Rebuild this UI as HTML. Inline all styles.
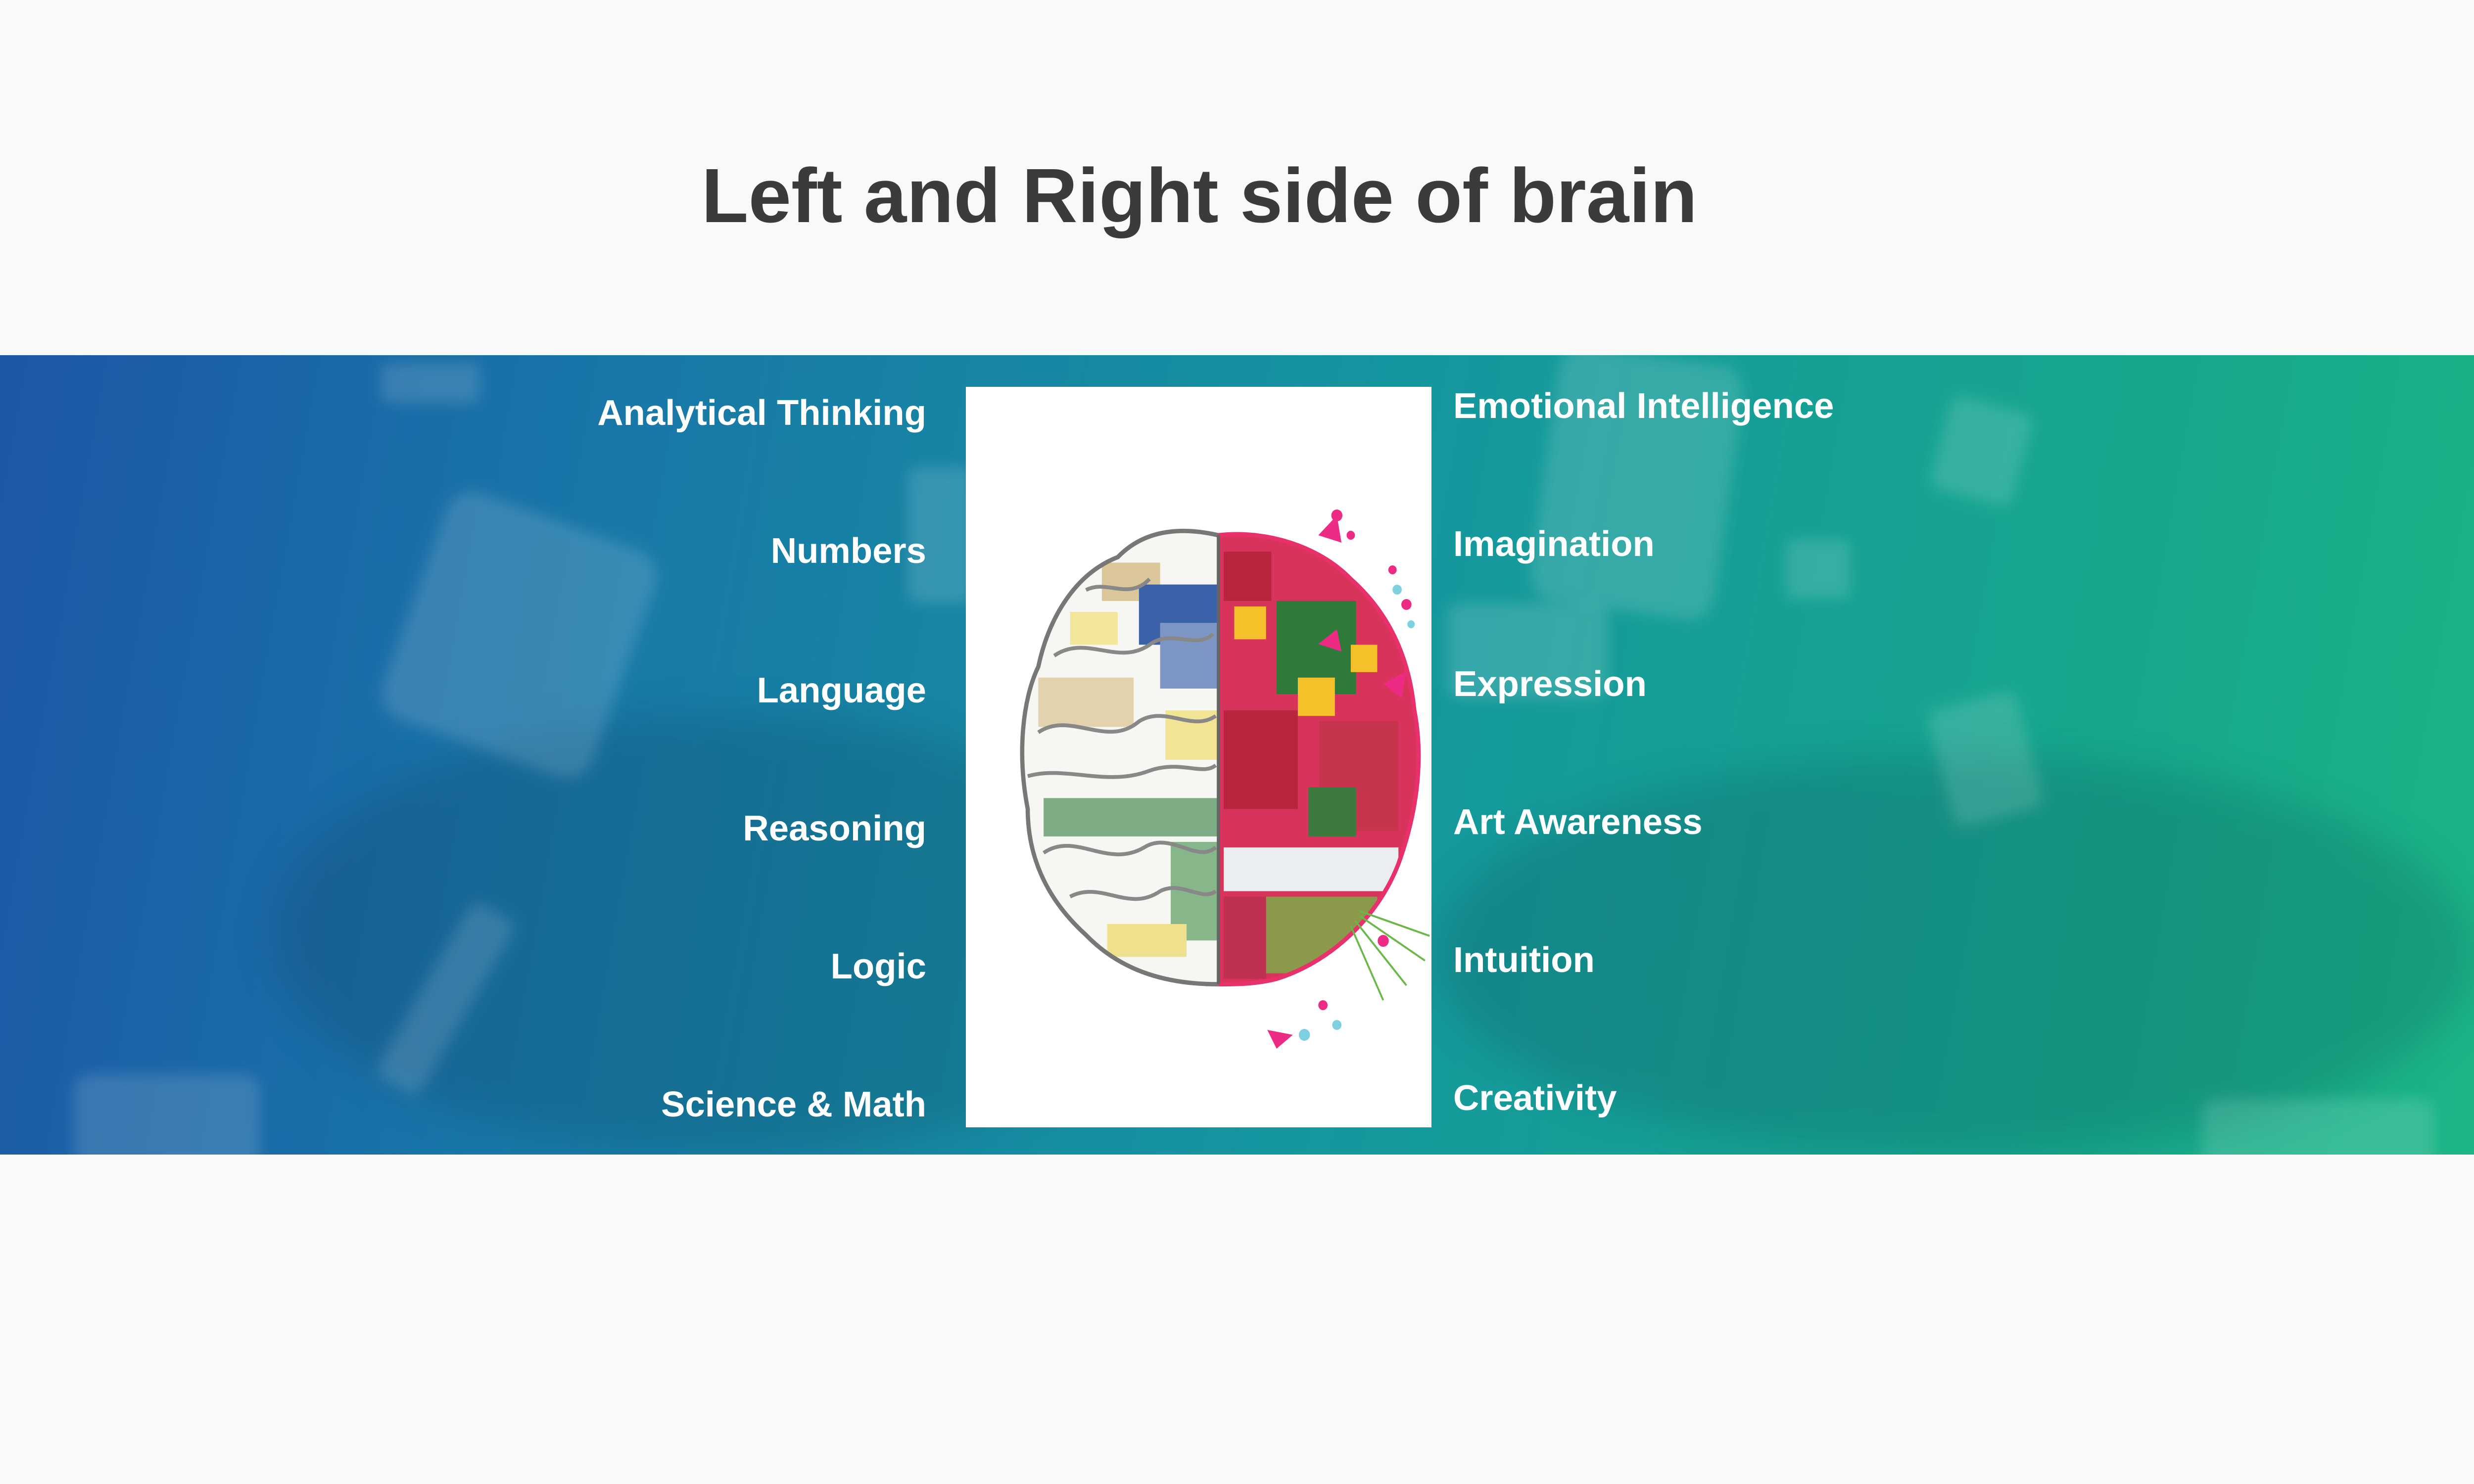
<!DOCTYPE html>
<html><head><meta charset="utf-8">
<style>
html,body{margin:0;padding:0;width:100%;height:100%}
body{background:#f9f9f9;position:relative;overflow:hidden;font-family:"Liberation Sans",Arial,sans-serif}
.wrap{position:absolute;left:0;top:0;width:100vw;height:100vh}
h1{position:absolute;left:0;width:96.96%;top:10.6%;margin:0;text-align:center;font-size:3.11vw;line-height:1;font-weight:bold;color:#3b3b3b;white-space:nowrap}
.band{position:absolute;left:0;top:23.93%;width:100%;height:53.87%;background:linear-gradient(100deg,#1c57a6 0%,#1878a8 25%,#15979e 55%,#16a98b 85%,#1bb587 100%);overflow:hidden}
.blob{position:absolute;background:rgba(255,255,255,0.14);border-radius:12%;filter:blur(14px)}
.dark{position:absolute;background:rgba(10,40,60,0.16);filter:blur(40px);border-radius:50%}
.panel{position:absolute;left:39.03%;top:26.07%;width:18.82%;height:49.9%;background:#fff}
.panel svg{position:absolute;left:0;top:0;width:100%;height:100%}
.l,.r{position:absolute;color:#fff;font-weight:bold;font-size:1.45vw;line-height:1;white-space:nowrap}
.l{right:62.56%;text-align:right}
.r{left:58.74%}
</style></head><body>
<div class="wrap">
<h1>Left and Right side of brain</h1>
<div class="band">
 <div class="dark" style="left:11%;top:45%;width:37%;height:55%"></div>
 <div class="dark" style="left:58%;top:50%;width:42%;height:50%"></div>
 <div class="blob" style="left:16.5%;top:20%;width:9%;height:30%;transform:rotate(20deg)"></div>
 <div class="blob" style="left:15.4%;top:1%;width:4%;height:5%"></div>
 <div class="blob" style="left:36.7%;top:14%;width:2.6%;height:17%"></div>
 <div class="blob" style="left:78.4%;top:6%;width:3.4%;height:12%;transform:rotate(15deg)"></div>
 <div class="blob" style="left:72.2%;top:23%;width:2.6%;height:7.5%"></div>
 <div class="blob" style="left:78.4%;top:43%;width:3.7%;height:15%;transform:rotate(-15deg)"></div>
 <div class="blob" style="left:62.4%;top:0%;width:7.5%;height:32%;transform:rotate(8deg)"></div>
 <div class="blob" style="left:58.5%;top:31%;width:6.5%;height:12%"></div>
 <div class="blob" style="left:17%;top:68%;width:2%;height:25%;transform:rotate(30deg)"></div>
 <div class="blob" style="left:3%;top:90%;width:7.5%;height:12%"></div>
 <div class="blob" style="left:89%;top:93%;width:9.4%;height:9%"></div>
</div>
<div class="panel">
<svg viewBox="0 0 1004 1497" preserveAspectRatio="none">
 <defs>
  <clipPath id="lh"><path d="M510 300 C420 280 360 300 320 340 C240 370 190 450 170 540 C140 600 130 700 150 800 C150 880 180 960 260 1030 C330 1100 420 1120 510 1120 Z"/></clipPath>
  <clipPath id="rh"><path d="M510 300 C600 290 700 320 760 380 C830 440 870 520 880 620 C900 720 880 820 850 900 C810 1000 720 1080 620 1110 C580 1120 540 1120 510 1120 Z"/></clipPath>
 </defs>
 <g transform="translate(122,300) scale(1.142,1.107) translate(-140,-300)">
 <g clip-path="url(#lh)">
  <rect x="120" y="280" width="400" height="860" fill="#f6f6f3"/>
  <rect x="290" y="350" width="110" height="70" fill="#dcc79a"/>
  <rect x="360" y="390" width="150" height="110" fill="#3b62a8"/>
  <rect x="400" y="460" width="110" height="120" fill="#7d96c4"/>
  <rect x="170" y="560" width="180" height="90" fill="#e2d2ae"/>
  <rect x="230" y="440" width="90" height="60" fill="#f2e79a"/>
  <rect x="410" y="620" width="100" height="90" fill="#f1e494"/>
  <rect x="180" y="780" width="330" height="70" fill="#5f9a68" opacity="0.8"/>
  <rect x="420" y="860" width="90" height="180" fill="#62a068" opacity="0.75"/>
  <rect x="300" y="1010" width="150" height="60" fill="#efe08e"/>
  <g fill="none" stroke="#888" stroke-width="7">
   <path d="M200 520 C260 480 320 540 380 500 C420 470 470 510 500 480"/>
   <path d="M170 660 C230 620 300 690 360 640 C410 610 460 660 505 630"/>
   <path d="M180 880 C240 840 300 910 370 870 C420 840 470 900 505 870"/>
   <path d="M230 960 C290 930 340 990 400 950 C440 930 480 970 505 950"/>
   <path d="M260 400 C300 380 340 420 380 380"/>
   <path d="M150 740 C220 720 300 760 380 730 C440 710 480 740 505 720"/>
  </g>
 </g>
 <g clip-path="url(#rh)">
  <rect x="505" y="280" width="400" height="860" fill="#d8335a"/>
  <rect x="620" y="420" width="150" height="170" fill="#2f7a3a"/>
  <rect x="520" y="330" width="90" height="90" fill="#b9243e"/>
  <rect x="520" y="620" width="140" height="180" fill="#b9243e"/>
  <rect x="700" y="640" width="150" height="200" fill="#c7344d"/>
  <rect x="660" y="560" width="70" height="70" fill="#f5c02a"/>
  <rect x="540" y="430" width="60" height="60" fill="#f5c02a"/>
  <rect x="760" y="500" width="50" height="50" fill="#f5c02a"/>
  <rect x="680" y="760" width="90" height="90" fill="#3c7a40"/>
  <rect x="520" y="870" width="330" height="80" fill="#eaeef0"/>
  <rect x="590" y="960" width="220" height="140" fill="#8a9a4a"/>
  <rect x="520" y="960" width="80" height="150" fill="#c03050"/>
 </g>
 <path d="M510 300 C420 280 360 300 320 340 C240 370 190 450 170 540 C140 600 130 700 150 800 C150 880 180 960 260 1030 C330 1100 420 1120 510 1120" fill="none" stroke="#777" stroke-width="8"/>
 <path d="M510 300 C600 290 700 320 760 380 C830 440 870 520 880 620 C900 720 880 820 850 900 C810 1000 720 1080 620 1110 C580 1120 540 1120 510 1120" fill="none" stroke="#e8316a" stroke-width="8"/>
 <line x1="510" y1="300" x2="510" y2="1120" stroke="#666" stroke-width="6"/>
 </g>
 <g fill="#ee2b84">
  <circle cx="800" cy="260" r="12"/><circle cx="830" cy="300" r="9"/><circle cx="950" cy="440" r="11"/>
  <circle cx="920" cy="370" r="9"/><circle cx="770" cy="1250" r="10"/><circle cx="900" cy="1120" r="12"/>
  <path d="M760 300 l40 -40 l10 55 z"/><path d="M900 600 l50 -25 l-10 55 z"/><path d="M650 1300 l55 10 l-35 28 z"/>
  <path d="M760 520 l40 -30 l10 45 z"/>
 </g>
 <g fill="#7fd0e0"><circle cx="930" cy="410" r="10"/><circle cx="960" cy="480" r="8"/><circle cx="800" cy="1290" r="10"/><circle cx="730" cy="1310" r="12"/></g>
 <g stroke="#6bb84a" stroke-width="4">
  <line x1="850" y1="1060" x2="1000" y2="1110"/><line x1="850" y1="1070" x2="990" y2="1160"/><line x1="840" y1="1080" x2="950" y2="1210"/><line x1="830" y1="1090" x2="900" y2="1240"/>
 </g>
</svg>
</div>
<div class="l" style="top:26.63%">Analytical Thinking</div>
<div class="l" style="top:35.93%">Numbers</div>
<div class="l" style="top:45.33%">Language</div>
<div class="l" style="top:54.63%">Reasoning</div>
<div class="l" style="top:63.93%">Logic</div>
<div class="l" style="top:73.23%">Science &amp; Math</div>
<div class="r" style="top:26.17%">Emotional Intelligence</div>
<div class="r" style="top:35.47%">Imagination</div>
<div class="r" style="top:44.9%">Expression</div>
<div class="r" style="top:54.2%">Art Awareness</div>
<div class="r" style="top:63.5%">Intuition</div>
<div class="r" style="top:72.8%">Creativity</div>
</div>
</body></html>
